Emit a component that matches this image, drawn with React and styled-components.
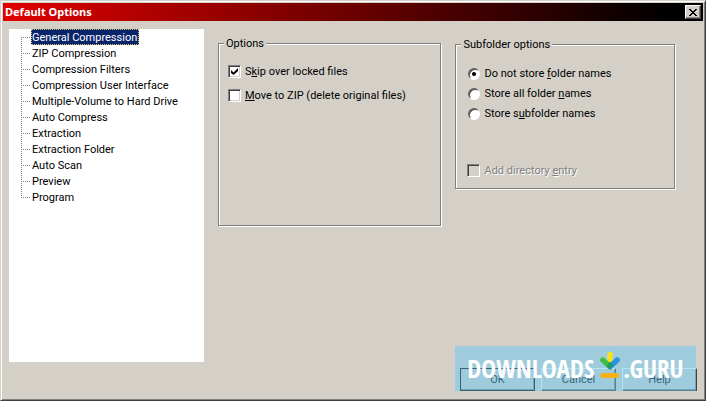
import React from "react";
import styled, { createGlobalStyle } from "styled-components";

const sections = [
  "General Compression",
  "ZIP Compression",
  "Compression Filters",
  "Compression User Interface",
  "Multiple-Volume to Hard Drive",
  "Auto Compress",
  "Extraction",
  "Extraction Folder",
  "Auto Scan",
  "Preview",
  "Program",
];

const App = () => {
  const [section, setSection] = React.useState(sections[0]);
  const [store, setStore] = React.useState("none");

  return (
    <>
      <GlobalStyle />
      <Dialog role='dialog' aria-labelledby='title'>
        <TitleBar>
          <Title id='title'>Default Options</Title>
          <CloseButton type='button' aria-label='Close'>
            <svg width='8' height='7' viewBox='0 0 8 7' shapeRendering='crispEdges'>
              <path d='M0 0h2v1h1v1h2v-1h1v-1h2v1h-1v1h-1v1h-1v1h1v1h1v1h1v1h-2v-1h-1v-1h-2v1h-1v1h-2v-1h1v-1h1v-1h1v-1h-1v-1h-1v-1h-1z' />
            </svg>
          </CloseButton>
        </TitleBar>
        <Content>
          <Tree>
            {sections.map((name) => (
              <TreeRow key={name}>
                <TreeButton
                  type='button'
                  $selected={name === section}
                  onClick={() => setSection(name)}
                >
                  {name}
                </TreeButton>
              </TreeRow>
            ))}
          </Tree>
          <OptionsGroup>
            <legend>Options</legend>
            <Field>
              <CheckBox defaultChecked />
              <span>
                S<u>k</u>ip over locked files
              </span>
            </Field>
            <Field>
              <CheckBox />
              <span>
                <u>M</u>ove to ZIP (delete original files)
              </span>
            </Field>
          </OptionsGroup>
          <SubfolderGroup>
            <legend>Subfolder options</legend>
            <RadioList>
              <Field>
                <Radio checked={store === "none"} onChange={() => setStore("none")} />
                <span>
                  Do not store <u>f</u>older names
                </span>
              </Field>
              <Field>
                <Radio checked={store === "all"} onChange={() => setStore("all")} />
                <span>
                  Store all folder <u>n</u>ames
                </span>
              </Field>
              <Field>
                <Radio checked={store === "sub"} onChange={() => setStore("sub")} />
                <span>
                  Store s<u>u</u>bfolder names
                </span>
              </Field>
            </RadioList>
            <Field $disabled>
              <CheckBox disabled />
              <span>
                Add directory <u>e</u>ntry
              </span>
            </Field>
          </SubfolderGroup>
        </Content>
        <Footer>
          <ButtonRow>
            <Button type='button' $primary>
              OK
            </Button>
            <Button type='button'>Cancel</Button>
            <Button type='button'>Help</Button>
            <Watermark>
              <span>DOWNLOADS</span>
              <DownloadLogo />
              <span>.GURU</span>
            </Watermark>
          </ButtonRow>
        </Footer>
      </Dialog>
    </>
  );
};

const DownloadLogo = () => (
  <svg width='22' height='28' viewBox='0 0 22 28' fill='none' strokeLinecap='round'>
    <path d='M11 3.5v11' stroke='#f7e11e' strokeWidth='5.4' />
    <path d='M3.8 9l7 6.5' stroke='#3fbf4a' strokeWidth='5.4' />
    <path d='M18.2 9l-7 6.5' stroke='#2795dc' strokeWidth='5.4' />
    <path d='M8.8 14.5l2.2-2.6 2.3 2.6-2.3 3z' fill='#1d9a62' stroke='#1d9a62' strokeWidth='1.6' />
    <path d='M4 24.5h13.5' stroke='#f8b015' strokeWidth='5' />
  </svg>
);

const GlobalStyle = createGlobalStyle`
  * {
    box-sizing: border-box;
  }

  body {
    margin: 0;
    background: #d4d0c8;
  }

  body, button {
    font-family: Roboto, "Liberation Sans", sans-serif;
    font-size: 11px;
    line-height: 14px;
    color: #000;
  }
`;

const Dialog = styled.div`
  display: flex;
  flex-direction: column;
  min-height: 100vh;
  padding: 1px;
  background: #d4d0c8;
  border: 1px solid;
  border-color: #d4d0c8 #404040 #404040 #d4d0c8;
  box-shadow: inset 1px 1px #fff, inset -1px -1px #808080;
`;

const TitleBar = styled.header`
  display: flex;
  align-items: center;
  justify-content: space-between;
  height: 18px;
  margin: 1px 1px 0;
  padding: 0 2px;
  background: linear-gradient(90deg, #e00000, #000 95%);
`;

const Title = styled.h1`
  margin: 0;
  font-family: "Noto Sans", sans-serif;
  font-size: 11px;
  font-weight: 700;
  line-height: 14px;
  color: #fff;
`;

const raised = `
  border: 1px solid;
  border-color: #fff #404040 #404040 #fff;
  box-shadow: inset -1px -1px #808080;
`;

const CloseButton = styled.button`
  display: flex;
  align-items: center;
  justify-content: center;
  width: 16px;
  height: 14px;
  padding: 0;
  background: #d4d0c8;
  ${raised}
`;

const Content = styled.main`
  flex: 1;
  display: grid;
  grid-template-columns: 195px minmax(0, 224fr) minmax(0, 220fr);
  align-items: start;
  column-gap: 14px;
  padding: 8px 29px 6px 7px;
`;

const Tree = styled.ul`
  align-self: stretch;
  margin: 0;
  padding: 0 0 0 12px;
  list-style: none;
  background: #fff;
`;

const TreeRow = styled.li`
  display: flex;
  height: 16px;

  &::before {
    content: "";
    width: 10px;
    background:
      repeating-linear-gradient(#808080 0 1px, transparent 1px 2px) 0 0 / 1px 100% no-repeat,
      repeating-linear-gradient(90deg, #808080 0 1px, transparent 1px 2px) 0 8px / 100% 1px no-repeat;
  }

  &:first-child::before {
    background-position: 0 8px, 0 8px;
  }

  &:last-child::before {
    background-size: 1px 8px, 100% 1px;
  }
`;

const TreeButton = styled.button`
  padding: 2px 1px 0 0;
  border: 1px ${({ $selected }) => ($selected ? "dotted #d8c070" : "solid transparent")};
  background: ${({ $selected }) => ($selected ? "#0a246a" : "none")};
  color: ${({ $selected }) => ($selected ? "#fff" : "#000")};
  line-height: 12px;
  white-space: nowrap;
`;

const Group = styled.fieldset`
  min-width: 0;
  margin: 0;
  border: 1px solid #808080;
  box-shadow: 1px 1px #fff, inset 1px 1px #fff;

  legend {
    padding: 2px 2px 0;
    background: #d4d0c8;
  }
`;

const OptionsGroup = styled(Group)`
  display: flex;
  flex-direction: column;
  gap: 9px;
  min-height: 191px;
  margin-top: 6px;
  padding: 13px 9px;

  legend {
    margin-left: -4px;
  }
`;

const SubfolderGroup = styled(Group)`
  min-height: 153px;
  margin-top: 7px;
  padding: 14px 11px 8px;

  legend {
    margin-left: -6px;
  }
`;

const RadioList = styled.div`
  display: flex;
  flex-direction: column;
  gap: 5px;
  margin-bottom: 42px;
`;

const Field = styled.label`
  display: flex;
  align-items: center;
  gap: 4px;
  white-space: nowrap;
  color: ${({ $disabled }) => ($disabled ? "#808080" : "#000")};
  text-shadow: ${({ $disabled }) => ($disabled ? "1px 1px #fff" : "none")};

  span {
    padding-top: 1px;
  }
`;

const CheckBox = styled.input.attrs({ type: "checkbox" })`
  appearance: none;
  flex: none;
  width: 13px;
  height: 13px;
  margin: 0;
  background: #fff;
  border: 1px solid;
  border-color: #808080 #fff #fff #808080;
  box-shadow: inset 1px 1px #404040, inset -1px -1px #d4d0c8;

  &:disabled {
    background: #d4d0c8;
  }

  &:checked::after {
    content: "";
    display: block;
    width: 7px;
    height: 7px;
    margin: 2px;
    background: #000;
    clip-path: polygon(0 28%, 36% 64%, 100% 0, 100% 42%, 36% 100%, 0 70%);
  }
`;

const Radio = styled.input.attrs({ type: "radio", name: "store" })`
  appearance: none;
  flex: none;
  width: 12px;
  height: 12px;
  margin: 0 0 0 1px;
  background: #fff;
  border: 1px solid;
  border-color: #606060 #fff #fff #606060;
  border-radius: 50%;
  box-shadow: inset 1px 1px #404040;

  &:checked::after {
    content: "";
    display: block;
    width: 4px;
    height: 4px;
    margin: 3px;
    background: #000;
    border-radius: 50%;
  }
`;

const Footer = styled.footer`
  display: flex;
  justify-content: flex-end;
  padding: 0 7px 8px;
`;

const ButtonRow = styled.div`
  position: relative;
  display: flex;
  gap: 6px;
`;

const Button = styled.button`
  width: 75px;
  height: 23px;
  padding: 0;
  background: #d4d0c8;
  ${raised}
  ${({ $primary }) => $primary && "outline: 1px solid #000; outline-offset: -1px;"}
`;

const Watermark = styled.div`
  position: absolute;
  inset: -22px 1px 0 -5px;
  display: flex;
  align-items: flex-start;
  justify-content: center;
  padding-top: 5px;
  background: rgba(106, 200, 242, 0.5);
  color: #fff;
  font-family: "Open Sans Condensed", "Noto Sans Condensed", "Liberation Sans Narrow", sans-serif;
  font-size: 25px;
  font-weight: 800;
  line-height: 34px;
  pointer-events: none;

  svg {
    margin: 0 2px 0 5px;
  }
`;

export default App;
